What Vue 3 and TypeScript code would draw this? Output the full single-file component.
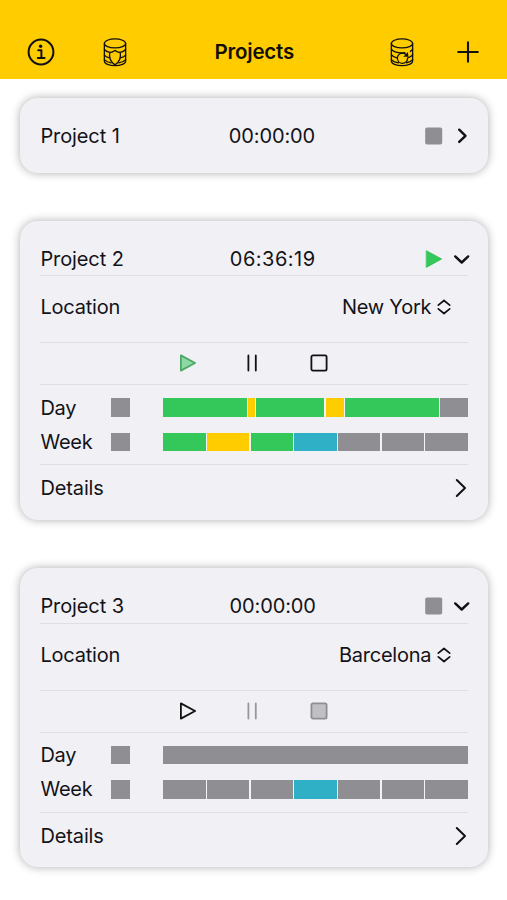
<script setup lang="ts">
type State = 'work' | 'pause' | 'off' | 'today'

interface Segment {
  state: State
  span: number
}

interface Project {
  name: string
  time: string
  running: boolean
  open: boolean
  location?: string
  day?: Segment[]
  week?: Segment[]
}

const week = (...states: State[]): Segment[] => states.map((state) => ({ state, span: 1 }))

const projects: Project[] = [
  { name: 'Project 1', time: '00:00:00', running: false, open: false },
  {
    name: 'Project 2',
    time: '06:36:19',
    running: true,
    open: true,
    location: 'New York',
    day: [
      { state: 'work', span: 84 },
      { state: 'pause', span: 6.5 },
      { state: 'work', span: 68 },
      { state: 'pause', span: 18 },
      { state: 'work', span: 94 },
      { state: 'off', span: 27.5 },
    ],
    week: week('work', 'pause', 'work', 'today', 'off', 'off', 'off'),
  },
  {
    name: 'Project 3',
    time: '00:00:00',
    running: false,
    open: true,
    location: 'Barcelona',
    day: [{ state: 'off', span: 1 }],
    week: week('off', 'off', 'off', 'today', 'off', 'off', 'off'),
  },
]
</script>

<template>
  <div class="screen">
    <header class="bar">
      <svg class="icon info" viewBox="0 0 28 28">
        <circle cx="14" cy="14" r="12.4" />
        <circle class="dot" cx="13.6" cy="8.3" r="1.7" />
        <path d="M11.2 12.3H14.4V19.9M10.8 20H17.6" />
      </svg>
      <svg class="icon db shield" viewBox="0 0 24 30">
        <ellipse cx="12" cy="5.6" rx="11" ry="4.6" />
        <path d="M1 5.6V23.8C1 26.6 6 28.6 12 28.6S23 26.6 23 23.8V5.6" />
        <path d="M1 11.5C2 13.5 4.4 14.4 7 14.9M23 11.5C22 13.5 19.6 14.4 17 14.9M1 17.6C2 19.2 4 20 6.4 20.5M23 17.6C22 19.2 20 20 17.6 20.5M1 22.4C3 24.5 5.5 25.3 8 25.7M23 22.4C21 24.5 18.5 25.3 16 25.7" />
        <path d="M12 13C10.4 14.3 8.6 15 6.6 15.2C5.5 21 8 25.2 12 27.8C16 25.2 18.5 21 17.4 15.2C15.4 15 13.6 14.3 12 13Z" />
      </svg>
      <h1>Projects</h1>
      <svg class="icon db restore" viewBox="0 0 24 30">
        <ellipse cx="12" cy="5.6" rx="11" ry="4.6" />
        <path d="M1 5.6V23.8C1 26.6 6 28.6 12 28.6S23 26.6 23 23.8V5.6" />
        <path d="M1 11.5C2.6 14.1 7 15.4 12 15.4C13.2 15.4 14 15.4 15 15.2M23 11.5C22.6 12.5 21.7 13.3 20.5 14M1 17.2C2.2 19.1 4.2 20 6.8 20.6M23 17.2C22 18.9 20.5 19.8 18.2 20.4M1 22.3C2.8 24.4 5.6 25.3 8.4 25.7M23 22.3C21.6 24.2 19.4 25.1 16.8 25.6" />
        <path d="M14.6 16.1C10.6 14.7 7.2 17.2 7.2 20.6C7.2 24 9.7 26.2 12.5 26.2C15.6 26.2 17.7 23.8 17.8 20.8" />
        <path class="head" d="M13.1 19.5L18.7 19.5L18.1 14.6L16.7 16.1L14.6 16.1L15.1 17.8Z" />
      </svg>
      <svg class="icon plus" viewBox="0 0 22 22"><path d="M11 1.2V20.8M1.2 11H20.8" /></svg>
    </header>

    <main>
      <section v-for="p in projects" :key="p.name" class="card" :class="{ open: p.open }">
        <div class="row title">
          <span class="name">{{ p.name }}</span>
          <span class="time" :class="{ active: p.running }">{{ p.time }}</span>
          <svg class="status" viewBox="0 0 18 18">
            <path v-if="p.running" class="go" d="M1.6 .9L16.6 9L1.6 17.2Z" />
            <rect v-else class="halt" x=".2" y=".5" width="17" height="17" rx="1.8" />
          </svg>
          <svg class="toggle" viewBox="0 0 18 18">
            <path v-if="p.open" d="M2.2 6.4L8.7 12.5L15.2 6.4" />
            <path v-else d="M6.2 2.7L12.5 8.8L6.2 14.9" />
          </svg>
        </div>

        <template v-if="p.open">
          <div class="row location">
            <span class="label">Location</span>
            <span class="place">{{ p.location }}</span>
            <svg class="picker" viewBox="0 0 14 16"><path d="M1.3 6.1L7 1.5L12.7 6.1M1.3 9.9L7 14.5L12.7 9.9" /></svg>
          </div>
          <div class="row controls" :class="{ running: p.running }">
            <svg class="play" viewBox="0 0 18 18"><path d="M1.9 1.4L16.1 9L1.9 16.6Z" /></svg>
            <svg class="hold" viewBox="0 0 18 18"><path d="M5.4 1.4V16.6M12.8 1.4V16.6" /></svg>
            <svg class="stop" viewBox="0 0 18 18"><rect x="1.4" y="1.4" width="15.2" height="15.2" rx="1.6" /></svg>
          </div>
          <div class="row charts">
            <div class="chart">
              <span class="label">Day</span>
              <i class="key"></i>
              <div class="track">
                <i v-for="(s, i) in p.day" :key="i" :class="s.state" :style="{ flexGrow: s.span }"></i>
              </div>
            </div>
            <div class="chart">
              <span class="label">Week</span>
              <i class="key"></i>
              <div class="track">
                <i v-for="(s, i) in p.week" :key="i" :class="s.state" :style="{ flexGrow: s.span }"></i>
              </div>
            </div>
          </div>
          <div class="row details">
            <span class="label">Details</span>
            <svg class="more" viewBox="0 0 12 20"><path d="M1.8 2L10 10L1.8 18" /></svg>
          </div>
        </template>
      </section>
    </main>
  </div>
</template>

<style>
body {
  background: #fff;
}
</style>

<style scoped>
.screen {
  width: 507px;
  height: 900px;
  overflow: hidden;
  background: #fff;
  color: #131318;
  font: 400 20px/24px Inter, 'Liberation Sans', sans-serif;
  letter-spacing: -0.12px;
}
svg {
  display: block;
  flex: none;
  fill: none;
  stroke: #111;
  stroke-width: 2;
  stroke-linecap: round;
  stroke-linejoin: round;
}
.bar {
  display: flex;
  align-items: center;
  box-sizing: border-box;
  height: 79.4px;
  padding: 25px 28px 0 27px;
  background: #fc0;
}
.info {
  width: 28px;
  height: 28px;
}
.info .dot {
  fill: #111;
  stroke: none;
}
.db {
  width: 24px;
  height: 29px;
  stroke-width: 1.35;
}
.shield {
  margin-left: 48px;
}
.db .head {
  fill: #111;
  stroke: none;
}
h1 {
  flex: 1;
  margin: 0 8.5px 0 0;
  text-align: center;
  font-size: 20.5px;
  font-weight: 600;
  line-height: 24px;
  letter-spacing: -0.2px;
  color: #130f00;
}
.restore {
  margin-right: 43px;
}
.plus {
  width: 22px;
  height: 22px;
  stroke-width: 2.1;
}
main {
  display: flex;
  flex-direction: column;
  gap: 48.3px;
  padding: 18.8px 19.5px 0 20px;
}
.card {
  box-sizing: border-box;
  height: 74.5px;
  padding: 21px 19.5px 0 20.4px;
  border-radius: 18px;
  background: #f1f0f5;
  box-shadow: 0 0 10px rgba(0, 0, 0, 0.32);
}
.card.open {
  height: 299px;
}
.row {
  display: flex;
  align-items: center;
  box-sizing: border-box;
  border-bottom: 1px solid #dfdee3;
}
.title {
  height: 34px;
  border-bottom: none;
}
.open .title {
  height: 34.4px;
  border-bottom: 1px solid #dfdee3;
}
.name {
  flex: none;
  width: 151.6px;
  letter-spacing: -0.1px;
}
.time {
  flex: none;
  width: 160px;
  text-align: center;
}
.open .time {
  padding-left: 1.5px;
  width: 158.5px;
}
.time.active {
  letter-spacing: 0.5px;
}
.status {
  width: 18px;
  height: 18px;
  margin-left: 73px;
}
.halt {
  fill: #8e8e93;
  stroke: none;
}
.go {
  fill: #34c759;
  stroke: #34c759;
  stroke-width: 1;
}
.toggle {
  width: 18px;
  height: 18px;
  margin-left: 10px;
  stroke-width: 2.4;
}
.location {
  height: 67px;
  padding: 0 16.8px 4px 0;
}
.location .label {
  flex: 1;
  letter-spacing: -0.2px;
}
.place {
  letter-spacing: -0.25px;
}
.picker {
  width: 14px;
  height: 16px;
  margin-left: 6px;
  stroke-width: 1.7;
}
.controls {
  height: 42px;
  padding: 0 0 1px 139px;
}
.controls svg {
  width: 18px;
  height: 18px;
  stroke-width: 1.8;
}
.controls .hold {
  margin-left: 46px;
}
.controls .stop {
  margin-left: 48.6px;
}
.controls.running .play {
  fill: #8ed9a3;
  stroke: #4ea968;
}
.controls:not(.running) .hold {
  stroke: #98979d;
}
.controls:not(.running) .stop {
  fill: #c0bfc5;
  stroke: #8e8e93;
}
.charts {
  flex-direction: column;
  align-items: stretch;
  gap: 10.5px;
  height: 80px;
  padding-top: 10.2px;
}
.chart {
  display: flex;
  align-items: center;
  height: 24px;
}
.chart .label {
  width: 70.5px;
  letter-spacing: -0.2px;
}
.key {
  width: 18.8px;
  height: 18.6px;
  background: #8e8e93;
}
.track {
  display: flex;
  gap: 1.3px;
  width: 304.5px;
  height: 18.6px;
  margin-left: 33.5px;
  background: #f4f4f6;
}
.track i {
  flex: 1 1 0;
}
.work {
  background: #34c759;
}
.pause {
  background: #fc0;
}
.off {
  background: #8e8e93;
}
.today {
  background: #30b0c7;
}
.details {
  justify-content: space-between;
  height: 46px;
  border-bottom: none;
}
.more {
  width: 12px;
  height: 20px;
  margin-right: 1px;
}
</style>
